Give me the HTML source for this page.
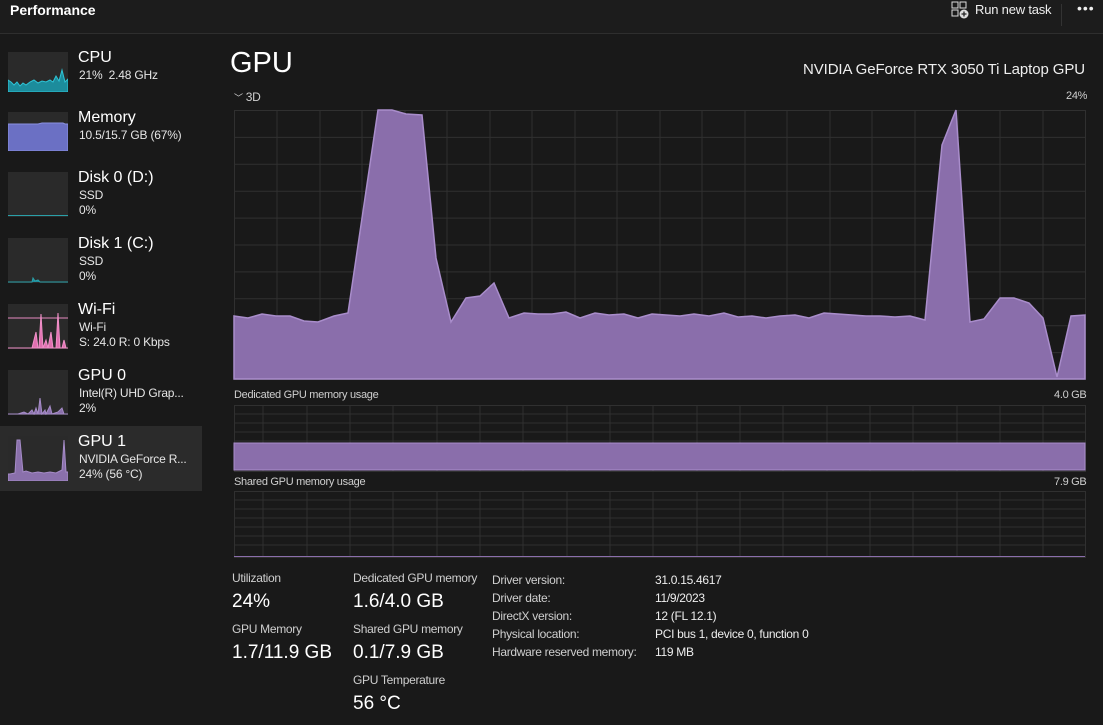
<!DOCTYPE html>
<html><head><meta charset="utf-8"><style>
*{margin:0;padding:0;box-sizing:border-box}
body{width:1103px;height:725px;background:#191919;font-family:"Segoe UI","Liberation Sans",sans-serif;color:#fff;position:relative;overflow:hidden}
.a{position:absolute;white-space:nowrap}
.t{font-size:16px;color:#fff}
.s{font-size:12px;color:#e6e6e6;letter-spacing:-0.2px}
.lbl{font-size:12px;color:#cfcfcf;letter-spacing:-0.3px}
.big{font-size:19px;color:#fff}
.th{position:absolute;left:8px;width:60px;background:#2a2a2a;overflow:hidden}
</style></head><body>
<div class="a" style="left:0;top:0;width:1103px;height:34px;background:#1c1c1c;border-bottom:1px solid #2e2e2e"></div>
<div class="a" style="left:10px;top:2px;font-size:14px;font-weight:bold">Performance</div>
<svg class="a" style="left:951px;top:1px" width="18" height="18" viewBox="0 0 18 18"><rect x="1" y="1" width="6" height="6" fill="none" stroke="#ddd"/><rect x="9" y="1" width="6" height="6" fill="none" stroke="#ddd"/><rect x="1" y="9" width="6" height="6" fill="none" stroke="#ddd"/><circle cx="13" cy="13" r="4.5" fill="#ddd"/><path d="M13 10.5v5M10.5 13h5" stroke="#222" stroke-width="1.3"/></svg>
<div class="a" style="left:975px;top:2px;font-size:13px;color:#eee;letter-spacing:-0.2px">Run new task</div>
<div class="a" style="left:1061px;top:4px;width:1px;height:22px;background:#333"></div>
<div class="a" style="left:1077px;top:0px;font-size:14px;color:#eee;letter-spacing:1px">•••</div>

<div class="a" style="left:0;top:426px;width:202px;height:65px;background:#2b2b2b"></div>
<div class="th" style="top:52px;height:40px"><svg width="60" height="40"><path d="M0 28 L3 30 6 33 9 30 12 34 15 31 18 33 22 30 26 28 30 31 34 29 38 30 42 28 45 30 48 24 51 29 54 18 57 30 60 27 L60 40 0 40Z" fill="#1c8c9c" stroke="#2ec4d6"/></svg></div>
<div class="th" style="top:112px;height:39px"><svg width="60" height="39"><path d="M0 12 L30 12 34 11 55 11 57 12 60 12 L60 39 0 39Z" fill="#6b70c4" stroke="#8a90e0"/></svg></div>
<div class="th" style="top:172px;height:45px"><div style="position:absolute;bottom:1px;width:60px;height:1px;background:#2aa0a8"></div></div>
<div class="th" style="top:238px;height:45px"><svg width="60" height="45"><path d="M0 44 L24 44 25 40 27 43 30 42 32 44 60 44" fill="#1c8c9c" stroke="#2aa0a8"/></svg></div>
<div class="th" style="top:304px;height:45px"><svg width="60" height="45"><path d="M0 14H60" stroke="#e58ac0"/><path d="M0 44 L24 44 28 28 30 44 31 44 33 10 35 44 38 36 40 44 43 28 45 44 48 44 50 9 52 44 54 44 56 36 58 44 60 44Z" fill="#e070b0" stroke="#f090c8"/></svg></div>
<div class="th" style="top:370px;height:45px"><svg width="60" height="45"><path d="M0 44 L10 44 16 42 20 44 24 40 26 44 28 38 30 44 32 28 34 44 37 40 38 44 42 36 44 44 50 42 54 38 56 44 60 44Z" fill="#8a70ab" stroke="#a68cc8"/></svg></div>
<div class="th" style="top:436px;height:45px"><svg width="60" height="45"><path d="M0 38 L2 38 7 37 9 4 12 4 15 36 18 35 24 37 30 36 36 37 42 36 48 37 54 34 56 4 58 36 60 36 L60 45 0 45Z" fill="#8a70ab" stroke="#a68cc8"/></svg></div>

<div class="a t" style="left:78px;top:49px">CPU</div><div class="a s" style="left:79px;top:68px">21%&nbsp; 2.48 GHz</div>
<div class="a t" style="left:78px;top:109px">Memory</div><div class="a s" style="left:79px;top:128px">10.5/15.7 GB (67%)</div>
<div class="a t" style="left:78px;top:169px">Disk 0 (D:)</div><div class="a s" style="left:79px;top:188px">SSD</div><div class="a s" style="left:79px;top:203px">0%</div>
<div class="a t" style="left:78px;top:235px">Disk 1 (C:)</div><div class="a s" style="left:79px;top:254px">SSD</div><div class="a s" style="left:79px;top:269px">0%</div>
<div class="a t" style="left:78px;top:301px">Wi-Fi</div><div class="a s" style="left:79px;top:320px">Wi-Fi</div><div class="a s" style="left:79px;top:335px">S: 24.0 R: 0 Kbps</div>
<div class="a t" style="left:78px;top:367px">GPU 0</div><div class="a s" style="left:79px;top:386px">Intel(R) UHD Grap...</div><div class="a s" style="left:79px;top:401px">2%</div>
<div class="a t" style="left:78px;top:433px">GPU 1</div><div class="a s" style="left:79px;top:452px">NVIDIA GeForce R...</div><div class="a s" style="left:79px;top:467px">24% (56 °C)</div>

<div class="a" style="left:230px;top:47px;font-size:29px">GPU</div>
<div class="a" style="left:803px;top:61px;font-size:15px;color:#eee;letter-spacing:-0.1px">NVIDIA GeForce RTX 3050 Ti Laptop GPU</div>
<div class="a lbl" style="left:234px;top:90px;font-size:12px"><span style="font-size:9px">﹀</span> 3D</div>
<div class="a lbl" style="left:1066px;top:90px;font-size:11px">24%</div>

<svg class="a" style="left:0;top:0" width="1103" height="725">
<g stroke="#303030" stroke-width="1" fill="none">
<rect x="234.5" y="110.5" width="851" height="269"/>
<path d="M234 137.4H1085M234 164.3H1085M234 191.2H1085M234 218.1H1085M234 245H1085M234 271.9H1085M234 298.8H1085M234 325.7H1085M234 352.6H1085"/>
<path d="M277 110V379M320 110V379M362 110V379M405 110V379M447 110V379M490 110V379M532 110V379M575 110V379M617 110V379M660 110V379M702 110V379M745 110V379M787 110V379M830 110V379M872 110V379M915 110V379M958 110V379M1000 110V379M1043 110V379"/>
<rect x="234.5" y="405.5" width="851" height="66"/>
<path d="M234 414H1085M234 423H1085M234 432H1085M234 441H1085M234 450H1085M234 459H1085"/>
<rect x="234.5" y="491.5" width="851" height="66"/>
<path d="M234 500H1085M234 509H1085M234 518H1085M234 527H1085M234 536H1085M234 545H1085"/>
<path d="M263 405V471M307 405V471M350 405V471M393 405V471M437 405V471M480 405V471M523 405V471M567 405V471M610 405V471M653 405V471M697 405V471M740 405V471M783 405V471M827 405V471M870 405V471M913 405V471M957 405V471M1000 405V471M1043 405V471"/>
<path d="M263 491V557M307 491V557M350 491V557M393 491V557M437 491V557M480 491V557M523 491V557M567 491V557M610 491V557M653 491V557M697 491V557M740 491V557M783 491V557M827 491V557M870 491V557M913 491V557M957 491V557M1000 491V557M1043 491V557"/>
</g>
<path d="M234 316 248 318 262 314 276 316 290 316 304 321 318 322 334 316 348 313 378 110 392 110 406 114 422 115 436 258 451 322 466 298 480 296 494 283 509 318 524 313 538 314 552 314 566 312 580 318 595 313 609 315 624 314 638 318 652 314 666 315 680 316 694 314 709 316 724 313 738 317 752 316 766 318 780 316 795 315 809 318 824 313 838 314 852 315 866 316 880 316 895 317 910 316 925 320 942 145 956 110 970 322 984 319 1000 298 1014 298 1029 303 1043 318 1057 377 1071 316 1085 315 L1085 379 234 379Z" fill="#8a6eab" stroke="#a98dcb" stroke-width="1.5"/>
<rect x="234" y="443" width="851" height="27" fill="#8a6eab" stroke="#a98dcb"/>
<path d="M234 556.5H1085" stroke="#8a6eab"/>
</svg>
<div class="a lbl" style="left:234px;top:389px;font-size:11px">Dedicated GPU memory usage</div>
<div class="a lbl" style="left:1054px;top:389px;font-size:11px">4.0 GB</div>
<div class="a lbl" style="left:234px;top:476px;font-size:11px">Shared GPU memory usage</div>
<div class="a lbl" style="left:1054px;top:476px;font-size:11px">7.9 GB</div>

<div class="a lbl" style="left:232px;top:571px">Utilization</div>
<div class="a big" style="left:232px;top:591px">24%</div>
<div class="a lbl" style="left:232px;top:622px">GPU Memory</div>
<div class="a big" style="left:232px;top:642px">1.7/11.9 GB</div>
<div class="a lbl" style="left:353px;top:571px">Dedicated GPU memory</div>
<div class="a big" style="left:353px;top:591px">1.6/4.0 GB</div>
<div class="a lbl" style="left:353px;top:622px">Shared GPU memory</div>
<div class="a big" style="left:353px;top:642px">0.1/7.9 GB</div>
<div class="a lbl" style="left:353px;top:673px">GPU Temperature</div>
<div class="a big" style="left:353px;top:693px">56 °C</div>
<div class="a lbl" style="left:492px;top:571px;line-height:18px">Driver version:<br>Driver date:<br>DirectX version:<br>Physical location:<br>Hardware reserved memory:</div>
<div class="a lbl" style="left:655px;top:571px;line-height:18px;color:#eee">31.0.15.4617<br>11/9/2023<br>12 (FL 12.1)<br>PCI bus 1, device 0, function 0<br>119 MB</div>
</body></html>
